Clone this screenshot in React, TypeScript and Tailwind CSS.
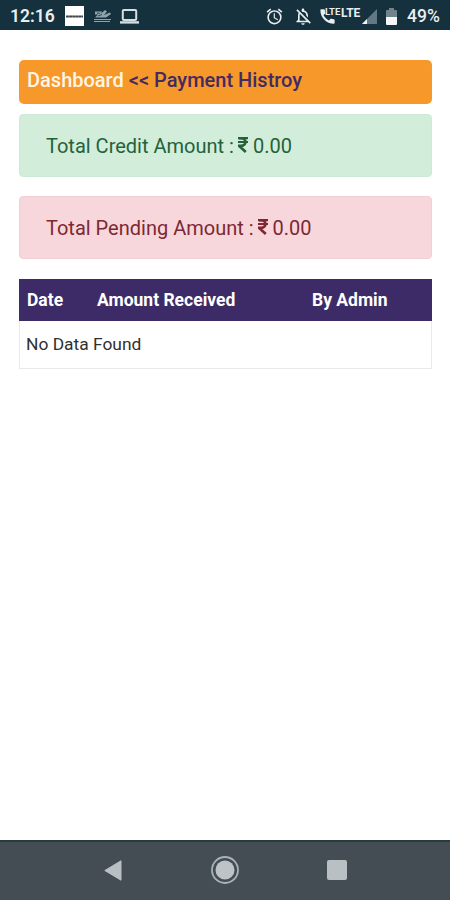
import React from 'react';
import { MdAlarm, MdOutlineNotificationsOff, MdCall } from 'react-icons/md';

function StatusBar() {
  return (
    <header className="flex h-[30px] shrink-0 items-center bg-[#15313e] pt-[2px] text-[#e9eef0]">
      <span className="ml-[10px] w-[55px] whitespace-nowrap pt-[2px] text-[17.5px] font-semibold leading-none">12:16</span>
      <div className="flex h-[20px] w-[19px] items-center justify-center bg-white">
        <svg width="17" height="3" viewBox="0 0 17 3">
          <path d="M0 1.5H17" stroke="#3d4548" strokeWidth="1.8" strokeDasharray="2.9 .2" />
        </svg>
      </div>
      <svg className="ml-[9px]" width="19" height="15" viewBox="0 0 19 15">
        <path d="M2 2.5H9L8 4.5L12 1L14 2.5L11 6L17 3.5L18 5L13 8.5H2L5 5.5H2Z" fill="#91a3aa" />
        <path d="M4 4.2H7M5 7L9 5.5" stroke="#2c4550" />
        <path d="M1 10.5H18M1 12.5H17" stroke="#91a3aa" strokeWidth="1.2" />
      </svg>
      <svg className="ml-[8px]" width="19" height="17" viewBox="0 0 19 17" fill="none">
        <rect x="2.8" y="2" width="13.4" height="10" rx="1" stroke="#d6dfe2" strokeWidth="2" />
        <path d="M0 13.2H19V15.6H0Z" fill="#d6dfe2" />
      </svg>
      <MdAlarm className="ml-[126px] h-[19px] w-[19px] shrink-0" />
      <MdOutlineNotificationsOff className="ml-[9px] h-[21px] w-[20px] shrink-0" />
      <div className="relative ml-[5px] h-[20px] w-[43px] shrink-0">
        <MdCall className="absolute left-0 top-[1px] h-[19px] w-[19px]" />
        <span className="absolute left-[7px] top-[1px] text-[9.5px] font-bold leading-none">LTE</span>
        <span className="absolute left-[23px] top-[1px] text-[12px] font-bold leading-none">LTE</span>
      </div>
      <svg className="ml-px shrink-0" width="15" height="15" viewBox="0 0 15 15">
        <path d="M0 15L15 0V15Z" fill="#627983" />
        <path d="M0 15L5 10V15Z" fill="#f2f5f6" />
      </svg>
      <svg className="ml-[9px] shrink-0" width="11" height="17" viewBox="0 0 11 17">
        <path d="M3 0H8V2H10Q11 2 11 3V9H0V3Q0 2 1 2H3Z" fill="#71838b" />
        <path d="M0 9H11V16Q11 17 10 17H1Q0 17 0 16Z" fill="#f5f7f8" />
      </svg>
      <span className="ml-[10px] whitespace-nowrap pt-[2px] text-[17.5px] font-medium leading-none">49%</span>
    </header>
  );
}

function NavigationBar() {
  return (
    <nav className="flex h-[60px] shrink-0 items-center border-t-2 border-[#2a3b3f] bg-[#454d54] pb-[2px]">
      <svg className="ml-[104px]" width="18" height="21" viewBox="0 0 18 21">
        <path d="M.8 10.5L17 .8V20.2Z" fill="#b9c0c4" stroke="#b9c0c4" strokeLinejoin="round" />
      </svg>
      <svg className="ml-[89px]" width="28" height="28" viewBox="0 0 28 28">
        <circle cx="14" cy="14" r="13" fill="none" stroke="#a9b2b7" strokeWidth="1.8" />
        <circle cx="14" cy="14" r="9.5" fill="#bdc3c6" />
      </svg>
      <div className="ml-[88px] h-[20px] w-[20px] rounded-[2px] bg-[#b9c0c4]" />
    </nav>
  );
}

function RupeeIcon() {
  return (
    <svg className="mb-px ml-[4px] shrink-0" width="10" height="16" viewBox="0 0 10 16" fill="none" stroke="currentColor">
      <path d="M0 1.1H10M0 5H10" strokeWidth="2.2" />
      <path d="M1 1.2H3.2C8.8 1.2 8.8 8.8 3.2 8.8H0.9L7.8 15" strokeWidth="2.7" />
    </svg>
  );
}

function Amount({ label, className }: { label: string; className: string }) {
  return (
    <div className={`flex h-[63px] items-center rounded-[4px] border pl-[26px] text-[20px] ${className}`}>
      <span className="whitespace-nowrap">{label} :</span>
      <RupeeIcon />
      <span className="ml-[5px]">0.00</span>
    </div>
  );
}

export default function App() {
  return (
    <div className="flex h-[900px] w-[450px] flex-col overflow-hidden bg-white font-['Roboto',sans-serif]">
      <StatusBar />
      <main className="flex-1 px-[19px] pt-[30px]">
        <div className="h-[44px] w-[413px] whitespace-nowrap rounded-[5px] bg-[#f7982b] pl-[8px] text-[20px] font-medium leading-[41px] text-[#432a62]">
          <span className="text-[#fff7e5]">Dashboard</span> &lt;&lt; Payment Histroy
        </div>
        <div className="mt-[10px] flex w-[413px] flex-col gap-[19px]">
          <Amount label="Total Credit Amount" className="border-[#cdead6] bg-[#d3eddb] text-[#23623a]" />
          <Amount label="Total Pending Amount" className="border-[#f4cfd5] bg-[#f7d7dc] text-[#7d2833]" />
        </div>
        <table className="mt-[20px] w-[413px] table-fixed border-separate border-spacing-0">
          <colgroup>
            <col className="w-[71px]" />
            <col className="w-[215px]" />
            <col />
          </colgroup>
          <thead>
            <tr className="h-[42px] bg-[#3d2b67] text-left text-[17.5px] leading-[20px] text-white">
              <th className="p-0 pl-[8px] font-bold">Date</th>
              <th className="p-0 pl-[7px] font-bold">Amount Received</th>
              <th className="p-0 pl-[7px] font-bold">By Admin</th>
            </tr>
          </thead>
          <tbody>
            <tr className="h-[48px] text-[17.4px] leading-[20px] text-[#303030]">
              <td colSpan={3} className="border border-t-0 border-[#e9e9eb] p-0 pb-[2px] pl-[6px]">No Data Found</td>
            </tr>
          </tbody>
        </table>
      </main>
      <NavigationBar />
    </div>
  );
}
